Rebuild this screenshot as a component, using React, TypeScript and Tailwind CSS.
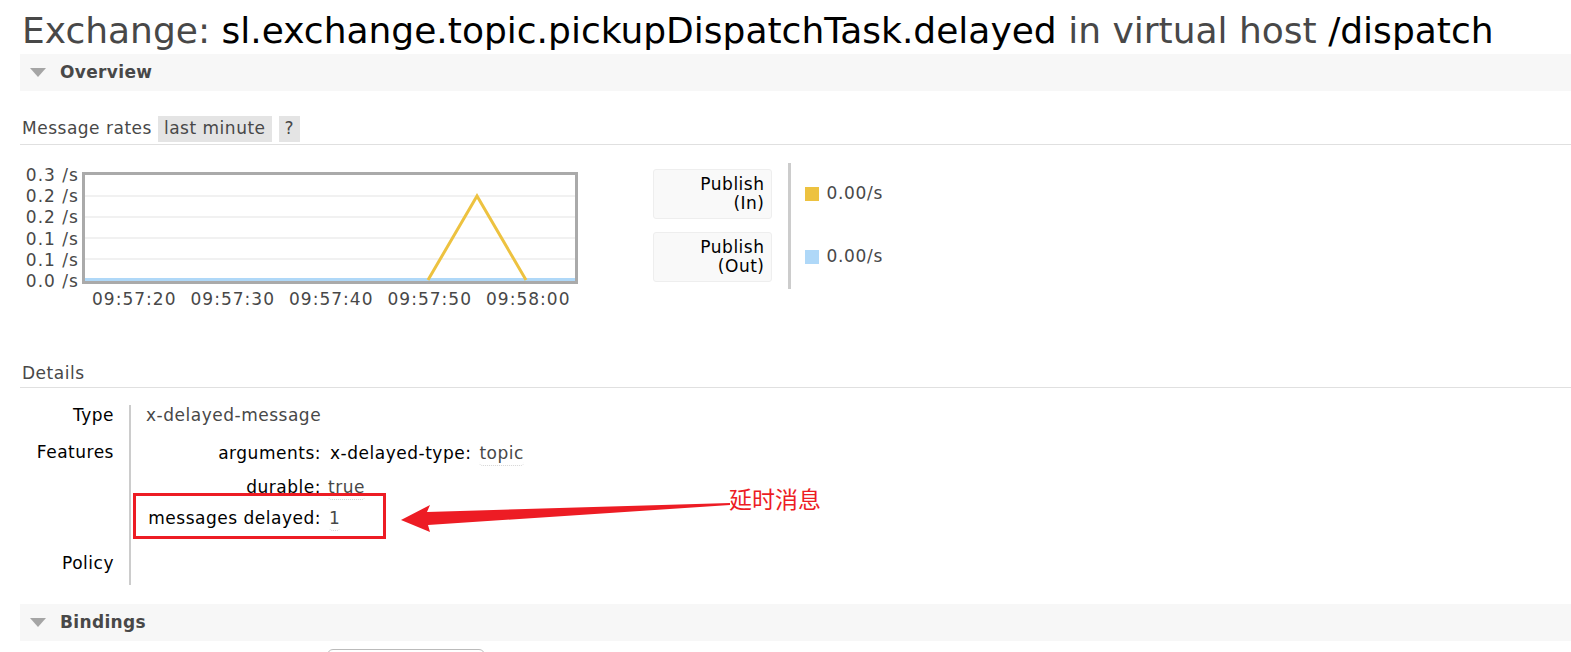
import React from "react";

const font = "font-['DejaVu_Sans','Noto_Sans',sans-serif]";

const yTicks = ["0.3 /s", "0.2 /s", "0.2 /s", "0.1 /s", "0.1 /s", "0.0 /s"];
const xTicks = ["09:57:20", "09:57:30", "09:57:40", "09:57:50", "09:58:00"];

function SectionBar({ title }: { title: string }) {
  return (
    <div className="ml-[20px] flex h-[37px] items-center bg-[#f7f7f7]">
      <span className="ml-[10px] mr-[14px] h-0 w-0 border-x-[8px] border-t-[9px] border-x-transparent border-t-[#a5a5a5]" />
      <span className="text-[17px] font-bold tracking-[0.02em] text-[#484848]">{title}</span>
    </div>
  );
}

function Chart() {
  return (
    <div className="flex flex-col">
      <div className="flex h-[119px]">
        <div className="flex w-[80px] flex-col items-end pr-[3px] text-[17px] leading-[21.2px] tracking-[0.06em] text-[#484848]">
          {yTicks.map((t, i) => (
            <span key={i}>{t}</span>
          ))}
        </div>
        <svg width="496" height="112" className="mt-[7px]">
          <rect x="1.5" y="1.5" width="493" height="109" fill="#fff" stroke="#aaa" strokeWidth="3" />
          {[24, 45, 66, 87].map((y) => (
            <line key={y} x1="3" x2="493" y1={y} y2={y} stroke="#ededed" strokeWidth="1.5" />
          ))}
          <line x1="3" x2="493" y1="107.5" y2="107.5" stroke="#afd8f8" strokeWidth="3" />
          <polyline points="346,108 395,24 444,108" fill="none" stroke="#edc240" strokeWidth="3" />
        </svg>
      </div>
      <div className="ml-[90px] mt-[5px] flex text-[17px] leading-[20px] tracking-[0.06em] text-[#484848]">
        {xTicks.map((t) => (
          <span key={t} className="w-[98.5px]">{t}</span>
        ))}
      </div>
    </div>
  );
}

function Legend() {
  const items = [
    { a: "Publish", b: "(In)", color: "bg-[#edc240]" },
    { a: "Publish", b: "(Out)", color: "bg-[#afd8f8]" },
  ];
  return (
    <div className="ml-[68px] mt-[-2px] flex">
      <div className="flex flex-col gap-[13px] pt-[6px]">
        {items.map((it) => (
          <div
            key={it.b}
            className="flex h-[50px] w-[119px] flex-col items-end justify-center rounded-[3px] border border-[#eee] bg-[#f9f9f9] pr-[6px] text-[17px] leading-[19px] tracking-[0.03em] text-black"
          >
            <span>{it.a}</span>
            <span>{it.b}</span>
          </div>
        ))}
      </div>
      <div className="ml-[16px] h-[126px] w-[3px] bg-[#ccc]" />
      <div className="ml-[14px] flex flex-col gap-[13px] pt-[6px]">
        {items.map((it) => (
          <div key={it.b} className="flex h-[50px] items-center gap-[8px] text-[17px] tracking-[0.04em] text-[#484848]">
            <span className={`h-[14px] w-[14px] ${it.color}`} />
            <span>0.00/s</span>
          </div>
        ))}
      </div>
    </div>
  );
}

export default function App() {
  return (
    <div className={`relative h-[652px] overflow-hidden bg-white ${font}`}>
      <h1 className="h-[54px] whitespace-nowrap pl-[22px] pt-[11px] text-[36px] font-normal leading-[40px] text-[#484848]">
        Exchange: <span className="text-black">sl.exchange.topic.pickupDispatchTask.delayed</span> in virtual host{" "}
        <span className="text-black">/dispatch</span>
      </h1>

      <SectionBar title="Overview" />

      <div className="ml-[20px] mt-[25px] flex items-center border-b border-[#e0e0e0] pb-[2px] text-[17px] tracking-[0.03em] text-[#484848]">
        <span className="ml-[2px] mr-[6px]">Message rates</span>
        <span className="flex h-[26px] items-center bg-[#e4e4e4] px-[6px]">last minute</span>
        <span className="ml-[7px] flex h-[26px] items-center bg-[#e4e4e4] px-[6px]">?</span>
      </div>

      <div className="ml-[2px] mt-[20px] flex">
        <Chart />
        <Legend />
      </div>

      <div className="ml-[20px] mt-[54px] border-b border-[#e0e0e0] pb-[4px] text-[17px] leading-[20px] tracking-[0.03em] text-[#484848]">
        <span className="ml-[2px]">Details</span>
      </div>

      <div className="mt-[17px] flex h-[180px] text-[17px] tracking-[0.03em]">
        <div className="flex w-[114px] flex-col items-end text-black">
          <div className="h-[37px] leading-[20px]">Type</div>
          <div className="h-[111px] leading-[20px]">Features</div>
          <div className="leading-[20px]">Policy</div>
        </div>
        <div className="ml-[15px] h-[180px] w-[2px] bg-[#ccc]" />
        <div className="flex flex-col">
          <div className="ml-[15px] h-[38px] leading-[20px] text-[#484848]">x-delayed-message</div>
          <div className="flex h-[34px] items-start leading-[20px]">
            <span className="w-[190px] text-right text-black">arguments:</span>
            <span className="ml-[9px] text-black">x-delayed-type:</span>
            <span className="ml-[8px] rounded-b-[4px] border-b border-dotted border-[#d4d4d4] pb-[2px] text-[#484848]">topic</span>
          </div>
          <div className="flex h-[31px] items-start leading-[20px]">
            <span className="w-[190px] text-right text-black">durable:</span>
            <span className="ml-[7px] rounded-b-[4px] border-b border-dotted border-[#d4d4d4] pb-[2px] text-[#484848]">true</span>
          </div>
          <div className="flex items-start leading-[20px]">
            <span className="w-[190px] text-right text-black">messages delayed:</span>
            <span className="ml-[8px] rounded-b-[4px] border-b border-dotted border-[#d4d4d4] pb-[2px] text-[#484848]">1</span>
          </div>
        </div>
      </div>

      <div className="mt-[19px]">
        <SectionBar title="Bindings" />
      </div>
      <div className="ml-[327px] mt-[8px] h-[20px] w-[158px] rounded-t-[6px] border border-[#bbb]" />

      {/* annotation drawn over the page */}
      <div className="absolute left-[133px] top-[493px] h-[46px] w-[253px] border-[3px] border-[#ed1c24]" />
      <svg className="absolute left-[395px] top-[495px]" width="345" height="45">
        <polygon points="6,25 35,10 32,17 335,8 335,10 33,30 35,37" fill="#ed1c24" />
      </svg>
      <span className="absolute left-[729px] top-[484px] font-['Noto_Sans_CJK_SC',sans-serif] text-[23px] leading-[28px] text-[#ed1c24]">
        延时消息
      </span>
    </div>
  );
}
